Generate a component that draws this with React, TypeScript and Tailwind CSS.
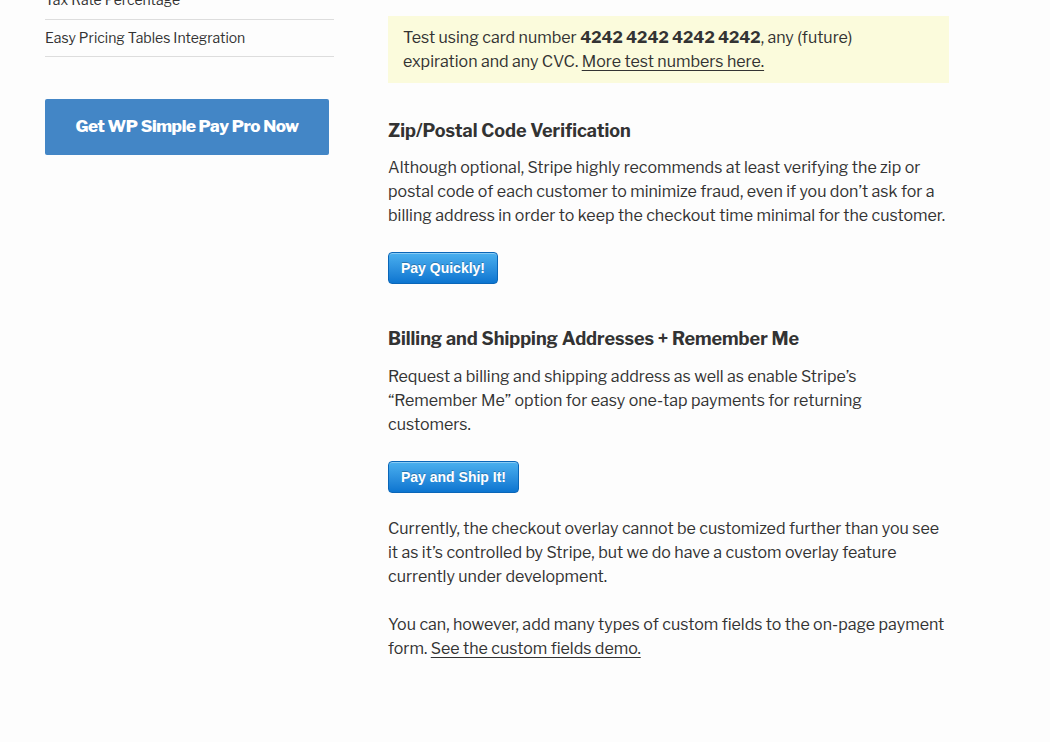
export default function App() {
  return (
    <div className="min-h-[742px] bg-[#fdfdfd] text-[#333] font-['Libre_Franklin','Liberation_Sans',Arial,sans-serif] overflow-hidden">
      <div className="flex pl-[45px]">
        {/* Sidebar */}
        <aside className="w-[289px] shrink-0 -mt-[19px]">
          <ul className="text-[14px] leading-[20px]">
            <li className="py-[9px] border-b border-[#ddd]">Tax Rate Percentage</li>
            <li className="py-[8px] border-b border-[#ddd]">Easy Pricing Tables Integration</li>
          </ul>
          <a className="mt-[42px] flex items-center justify-center w-[284px] h-[56px] rounded-[2px] bg-[#4386c6] text-white text-[17px] font-extrabold tracking-[-0.4px]">
            Get WP Simple Pay Pro Now
          </a>
        </aside>

        {/* Main content */}
        <main className="ml-[54px] w-[561px] pt-[16px] text-[16px] leading-[24px]">
          <div className="bg-[#fbfbdc] px-[15px] pt-[10px] pb-[9px]">
            Test using card number <strong className="font-bold">4242 4242 4242 4242</strong>, any (future)
            <br />
            expiration and any CVC. <a className="underline underline-offset-[3px]">More test numbers here.</a>
          </div>

          <h3 className="mt-[36px] text-[18px] leading-[24px] font-bold">Zip/Postal Code Verification</h3>
          <p className="mt-[13px]">
            Although optional, Stripe highly recommends at least verifying the zip or postal code of each customer to
            minimize fraud, even if you don’t ask for a billing address in order to keep the checkout time minimal for
            the customer.
          </p>
          <StripeButton className="mt-[24px] w-[110px]">Pay Quickly!</StripeButton>

          <h3 className="mt-[43px] text-[18px] leading-[24px] font-bold">Billing and Shipping Addresses + Remember Me</h3>
          <p className="mt-[14px]">
            Request a billing and shipping address as well as enable Stripe’s “Remember Me” option for easy one-tap
            payments for returning
            <br />
            customers.
          </p>
          <StripeButton className="mt-[24px] w-[131px]">Pay and Ship It!</StripeButton>

          <p className="mt-[24px]">
            Currently, the checkout overlay cannot be customized further than you see it as it’s controlled by Stripe,
            but we do have a custom overlay feature currently under development.
          </p>
          <p className="mt-[24px]">
            You can, however, add many types of custom fields to the on-page payment form.{' '}
            <a className="underline underline-offset-[3px]">See the custom fields demo.</a>
          </p>
        </main>
      </div>
    </div>
  )
}

function StripeButton({ children, className }: { children: React.ReactNode; className?: string }) {
  return (
    <button
      className={`block h-[32px] rounded-[4px] border border-[#0a66b8] bg-gradient-to-b from-[#4ab0ef] to-[#0b75d0] text-white text-[14px] font-bold font-['Liberation_Sans',Arial,sans-serif] shadow-[inset_0_1px_0_rgba(255,255,255,0.35)] [text-shadow:0_-1px_0_rgba(0,0,0,0.25)] ${className ?? ''}`}
    >
      {children}
    </button>
  )
}
